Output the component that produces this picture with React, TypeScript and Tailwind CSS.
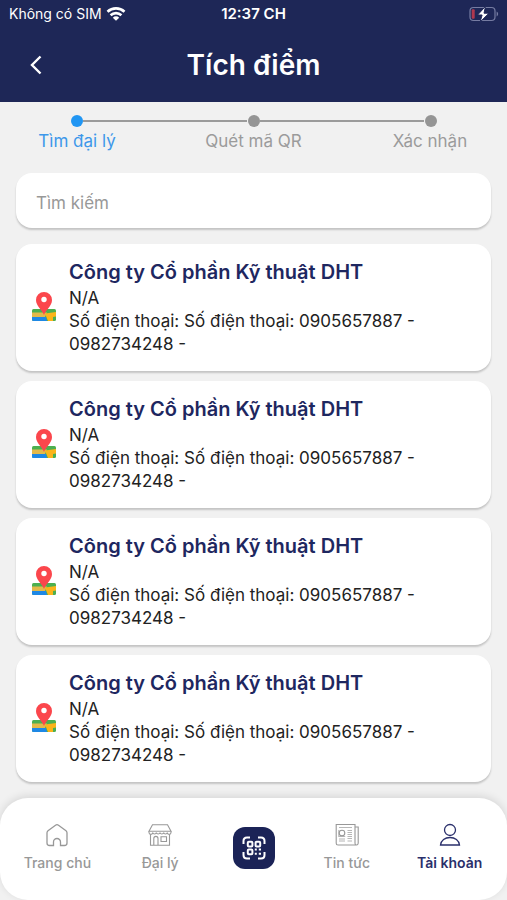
import { useState, type ReactNode } from "react";

const STEPS = ["Tìm đại lý", "Quét mã QR", "Xác nhận"];

const AGENCIES = [1, 2, 3, 4].map((id) => ({
    id,
    name: "Công ty Cổ phần Kỹ thuật DHT",
    address: "N/A",
    phone: "Số điện thoại: 0905657887 - 0982734248 -",
}));

function StatusBar() {
    return (
        <div className="grid h-7 grid-cols-3 items-center px-2">
            <div className="flex items-center gap-1 whitespace-nowrap pl-px text-sm">
                <span>Không có SIM</span>
                <svg width="20" height="14" viewBox="0 0 20 14" fill="none" stroke="white" strokeWidth="2.6">
                    <path d="M1.5 4.8a12.3 12.3 0 0 1 17 0" />
                    <path d="M4.6 8.3a7.8 7.8 0 0 1 10.8 0" />
                    <path d="M10 13.8 6.800 10.700a4.300 4.300 0 0 1 6.400 0z" fill="white" stroke="none" />
                </svg>
            </div>
            <span className="text-center text-[15px] font-semibold">12:37 CH</span>
            <svg className="ml-auto" width="31" height="18" viewBox="0 0 31 18">
                <rect x="2" y="2.5" width="25" height="13" rx="3.5" fill="none" stroke="#767ca2" strokeWidth="1.2" />
                <path d="M28.6 6.6c2 .8 2 4 0 4.8z" fill="#767ca2" />
                <rect x="3.7" y="4.3" width="3" height="9.4" rx="1" fill="#b0384e" />
                <path d="M17.5 1.3 9.6 10h4.5l-2 7L21 8.2h-5z" fill="white" stroke="#1e2757" strokeWidth="1" />
            </svg>
        </div>
    );
}

function Header() {
    return (
        <header className="bg-[#1e2757] text-white">
            <StatusBar />
            <div className="grid h-[74px] grid-cols-[40px_1fr_40px] items-center px-4">
                <button aria-label="Quay lại" className="flex h-10 w-10 items-center justify-center">
                    <svg width="14" height="20" viewBox="0 0 14 20" fill="none" stroke="white" strokeWidth="2.4">
                        <path d="M11.5 1.5 3 10l8.5 8.5" />
                    </svg>
                </button>
                <h1 className="text-center text-[28px] font-semibold">Tích điểm</h1>
            </div>
        </header>
    );
}

function Stepper({ current }: { current: number }) {
    return (
        <ol className="grid grid-cols-[154px_1fr_154px] pt-[13px]">
            {STEPS.map((label, idx) => (
                <li
                    key={label}
                    className={
                        idx === current
                            ? "flex flex-col items-center text-[#3d98ea]"
                            : "flex flex-col items-center text-[#9b9b9b]"
                    }
                >
                    <div className="flex w-full items-center">
                        <span className={idx === 0 ? "h-0.5 flex-1" : "mr-px h-0.5 flex-1 bg-[#9b9b9b]"} />
                        <span
                            className={
                                idx === current
                                    ? "h-3 w-3 rounded-full bg-[#2196f3]"
                                    : "h-3 w-3 rounded-full bg-[#959595]"
                            }
                        />
                        <span className={idx === STEPS.length - 1 ? "h-0.5 flex-1" : "h-0.5 flex-1 bg-[#9b9b9b]"} />
                    </div>
                    <span className="text-[17px] leading-7">{label}</span>
                </li>
            ))}
        </ol>
    );
}

function MapPin() {
    return (
        <svg className="shrink-0" width="24" height="30" viewBox="0 0 24 30">
            <rect x="0" y="17" width="24" height="12" rx="1.5" fill="#4caf50" />
            <path d="M0 20.5h15l-2 4.5H0z" fill="#e3b94a" />
            <path d="M0 25h14l1 4H1.500Q0 29 0 27.500z" fill="#1e88e5" />
            <path d="M13 21.500 24 20v4.500l-3 .5v4h-5z" fill="#fbb41a" />
            <path d="M12 23C10 17.500 4 14 4 8a8 8 0 0 1 16 0c0 6-6 9.500-8 15z" fill="#fb464c" />
            <circle cx="12" cy="7.500" r="2.700" fill="white" />
        </svg>
    );
}

function AgencyCard({ name, address, phone }: { name: string; address: string; phone: string }) {
    return (
        <li className="flex items-center gap-[13px] rounded-2xl bg-white px-4 pb-[15px] pt-[14px] shadow-[0_2px_2px_#00000030]">
            <MapPin />
            <div className="min-w-0 flex-1 pr-10 text-[17px] leading-[23px] text-[#222222]">
                <h2 className="mb-px text-xl font-semibold leading-7 text-[#1e2760]">{name}</h2>
                <p>{address}</p>
                <p>{`Số điện thoại: ${phone}`}</p>
            </div>
        </li>
    );
}

function HomeIcon() {
    return (
        <svg width="24" height="24" viewBox="0 0 24 24" fill="none" stroke="currentColor" strokeWidth="1.3">
            <path d="M4.500 22.500h4v-3.500a3.500 3.500 0 0 1 7 0v3.500h4q2.500 0 2.500-2.500V9.800q0-1.200-1-2L13.500 2.200q-1.500-1-3 0L3 7.800q-1 .8-1 2V20q0 2.500 2.500 2.500z" />
        </svg>
    );
}

function StoreIcon() {
    return (
        <svg width="24" height="24" viewBox="0 0 24 24" fill="none" stroke="currentColor" strokeWidth="1.1">
            <path d="M4.500 1.800h15L23 8.300H1z" />
            <path d="M1 8.300v1.200a1.850 1.850 0 0 0 3.700 0 1.850 1.850 0 0 0 3.650 0 1.850 1.850 0 0 0 3.650 0 1.850 1.850 0 0 0 3.650 0 1.850 1.850 0 0 0 3.650 0 1.850 1.850 0 0 0 3.700 0V8.300" />
            <path d="M2.500 11.500v10.800h19V11.500M5.800 22.300V15.500a2 2 0 0 1 4.200 0v6.800M13 13.800h5.500v4.700H13z" />
        </svg>
    );
}

function NewsIcon() {
    return (
        <svg width="24" height="24" viewBox="0 0 24 24" fill="none" stroke="currentColor" strokeWidth="1.1">
            <path d="M21.500 22H3q-1.800 0-1.800-1.800V1.500H20v18.700q0 1.800 1.500 1.800t1.700-1.800V4H20" />
            <circle cx="7" cy="10" r="2.800" />
            <path
                d="M4 4.500h13M3.800 7v6.500h6.400M12.500 7.500H17M12.500 9.500H17M12.500 11.500H17M12.500 13.500H17M4 16h6M4 18h6M12.500 15.500H17M12.500 18H17"
                strokeOpacity=".7"
            />
        </svg>
    );
}

function UserIcon() {
    return (
        <svg width="24" height="24" viewBox="0 0 24 24" fill="none" stroke="currentColor" strokeWidth="1.3">
            <circle cx="12" cy="7" r="5.5" />
            <path d="M2.500 22C3 17.500 7 14.500 12 14.500s9 3 9.500 7.500z" />
        </svg>
    );
}

function QrIcon() {
    return (
        <svg width="24" height="24" viewBox="0 0 24 24" fill="none" stroke="white" strokeWidth="2">
            <path d="M1.500 8V5q0-3.500 3.500-3.500h3M16 1.500h3q3.500 0 3.500 3.500v3M22.500 16v3q0 3.500-3.500 3.500h-3M8 22.500H5q-3.500 0-3.500-3.500v-3" />
            <rect x="5.8" y="5.8" width="4.6" height="4.6" rx="1" />
            <rect x="13.6" y="5.8" width="4.6" height="4.6" rx="1" />
            <rect x="5.8" y="13.6" width="4.6" height="4.6" rx="1" />
            <path d="M12.800 13.600h2M16.800 13.600h2.200M12.800 17.800h2M16.800 17.800h2.200" />
        </svg>
    );
}

function NavItem({ label, icon, active }: { label: string; icon: ReactNode; active?: boolean }) {
    return (
        <a
            href="#"
            className={
                active
                    ? "flex flex-1 flex-col items-center gap-1.5 whitespace-nowrap text-sm font-semibold text-[#2a2f6b]"
                    : "flex flex-1 flex-col items-center gap-1.5 whitespace-nowrap text-sm font-medium text-[#989898]"
            }
        >
            {icon}
            {label}
        </a>
    );
}

function BottomNav() {
    return (
        <nav className="mt-auto flex items-center rounded-[28px] bg-white px-1.5 pb-[27px] pt-[25px] shadow-[0_-2px_8px_#0000001c]">
            <NavItem label="Trang chủ" icon={<HomeIcon />} />
            <NavItem label="Đại lý" icon={<StoreIcon />} />
            <div className="flex w-[84px] justify-center">
                <button
                    aria-label="Quét mã QR"
                    className="flex h-[42px] w-[42px] items-center justify-center rounded-xl bg-[#1b2357]"
                >
                    <QrIcon />
                </button>
            </div>
            <NavItem label="Tin tức" icon={<NewsIcon />} />
            <NavItem label="Tài khoản" icon={<UserIcon />} active />
        </nav>
    );
}

export default function App() {
    const [search, setSearch] = useState("");

    return (
        <div className="flex min-h-screen flex-col bg-[#f1f1f1] font-['Inter','Liberation_Sans',sans-serif]">
            <Header />
            <Stepper current={0} />
            <main className="px-4 pb-4 pt-[18px]">
                <input
                    type="text"
                    aria-label="Tìm kiếm"
                    placeholder="Tìm kiếm"
                    value={search}
                    onChange={(e) => setSearch(e.target.value)}
                    className="block h-[55px] w-full rounded-2xl bg-white px-5 pt-1 text-[17px] text-[#222222] shadow-[0_2px_2px_#00000030] outline-none placeholder:text-[#989898]"
                />
                <ul className="mt-4 flex flex-col gap-[10px]">
                    {AGENCIES.map((agency) => (
                        <AgencyCard key={agency.id} name={agency.name} address={agency.address} phone={agency.phone} />
                    ))}
                </ul>
            </main>
            <BottomNav />
        </div>
    );
}
